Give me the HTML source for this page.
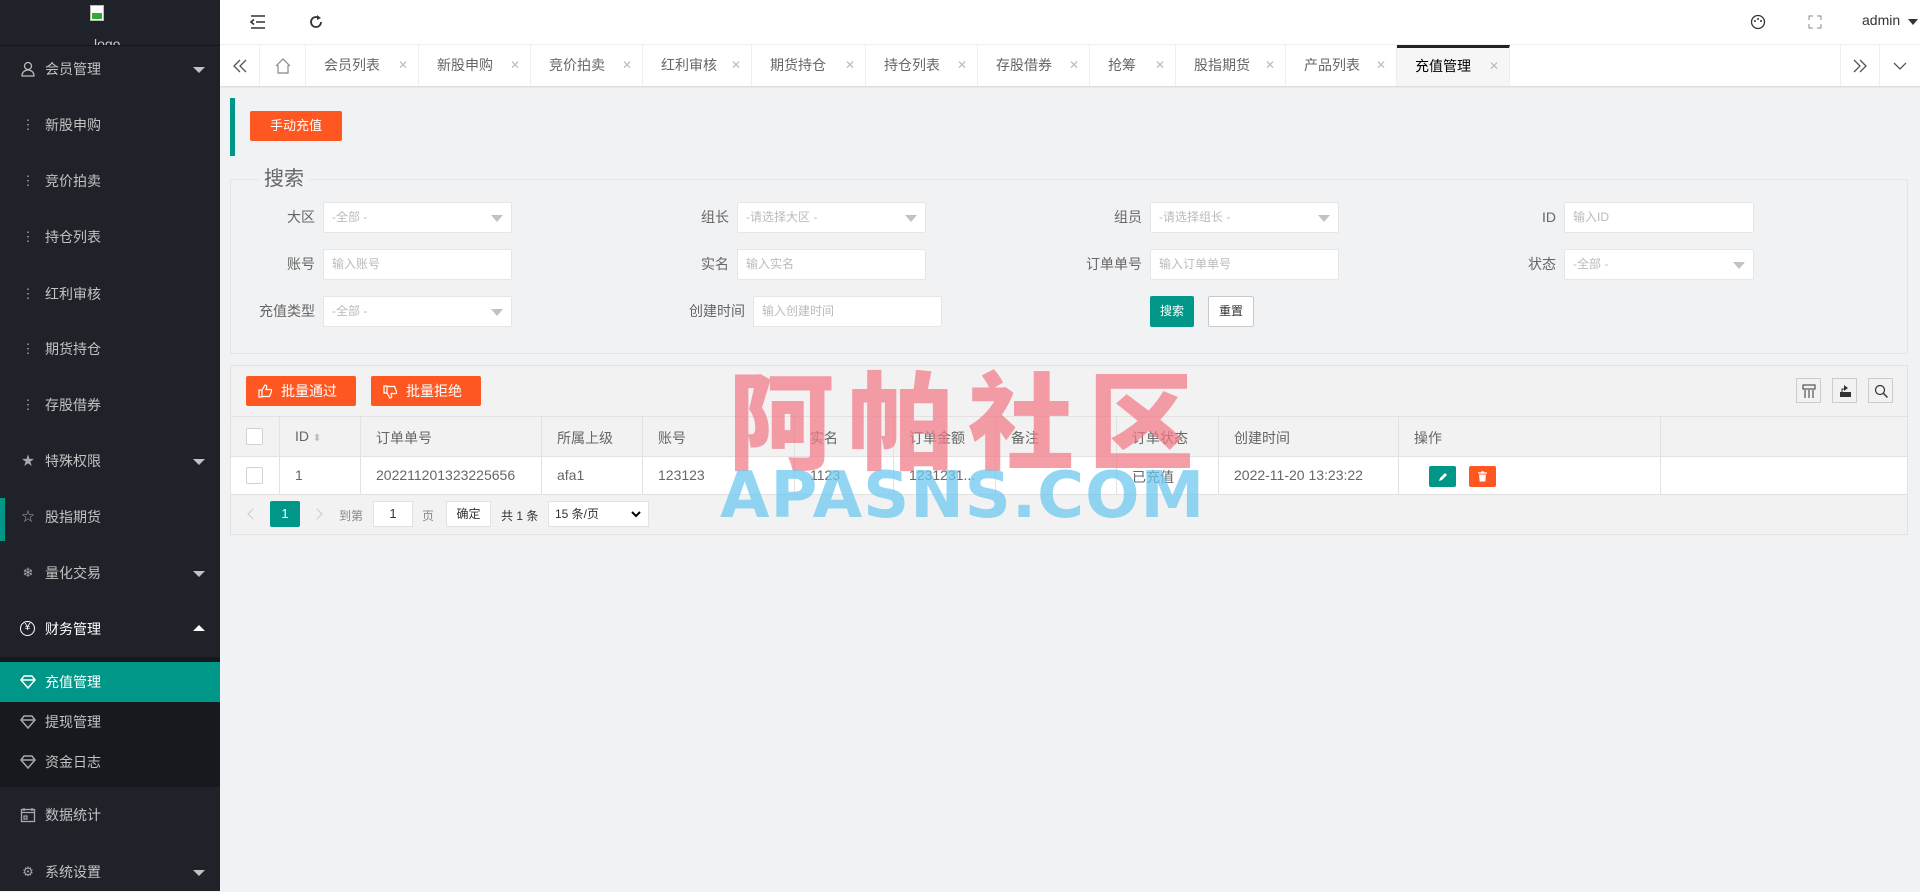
<!DOCTYPE html>
<html><head><meta charset="utf-8"><style>
*{margin:0;padding:0;box-sizing:border-box}
body{width:1920px;height:891px;overflow:hidden;background:#f1f2f4;font-family:"Liberation Sans","Noto Sans CJK SC",sans-serif;font-size:14px;color:#666;position:relative}
.a{position:absolute}
#side{left:0;top:0;width:220px;height:891px;background:#20222a}
.mi{position:absolute;left:0;width:220px;height:40px;line-height:40px;color:#c2c2c2;font-size:14px}
.mi .ic{position:absolute;left:20px;width:16px;text-align:center;font-size:13px;color:#aaa}
.mi svg{position:absolute;left:20px;top:12px}
.mi .tx{position:absolute;left:45px}
.mi .ar{position:absolute;right:15px;top:18px;width:0;height:0;border-left:6px solid transparent;border-right:6px solid transparent;border-top:6px solid #c2c2c2}
.mi .up{border-top:none;border-bottom:6px solid #fff;top:16px}
#hdr{left:220px;top:0;width:1700px;height:45px;background:#fff;border-bottom:1px solid #f0f0f0}
#tabs{left:220px;top:45px;width:1700px;height:41px;background:#fff;box-shadow:0 1px 2px rgba(0,0,0,.12)}
.tb{position:absolute;top:0;height:41px;line-height:41px;border-right:1px solid #eee;color:#666;font-size:14px;padding-left:18px}
.tb .x{position:absolute;right:10px;color:#bbb;font-size:12px}
.tb svg{position:absolute;left:50%;top:50%;transform:translate(-50%,-50%)}
.inp{position:absolute;height:31px;background:#fff;border:1px solid #e6e6e6;border-radius:2px;color:#bbb;font-size:12px;line-height:29px;padding-left:8px}
.inp .dd{position:absolute;right:8px;top:12px;border-left:6px solid transparent;border-right:6px solid transparent;border-top:7px solid #c2c2c2}
.lb{position:absolute;text-align:right;width:100px;font-size:14px;color:#666;line-height:31px}
.btn{position:absolute;background:#ff5722;color:#fff;text-align:center;border-radius:2px;font-size:14px}
.th,.td{position:absolute;padding-left:14px;white-space:nowrap}
.vl{position:absolute;top:416px;width:1px;height:79px;background:#e2e2e2}
.cb{position:absolute;width:17px;height:17px;border:1px solid #d2d2d2;background:#fff;border-radius:2px}
.ti{position:absolute;top:378px;width:25px;height:25px;border:1px solid #ccc}
.ti svg{position:absolute;left:5px;top:5px}
</style></head><body>
<div id="side" class="a">
 <div class="a" style="left:90px;top:5px;width:14px;height:16px;border:1px solid #bbb;background:#fff"><div style="position:absolute;left:1px;bottom:1px;width:10px;height:6px;background:#3a3"></div></div>
 <div class="a" style="left:94px;top:33px;height:12px;overflow:hidden;color:#ccc;font-size:14px;line-height:22px">logo</div>
 <div class="a" style="left:0;top:45px;width:220px;height:1px;background:#15161b"></div>
 <div class="mi" style="top:49px"><svg width="16" height="16"><circle cx="8" cy="5" r="3.5" stroke="#bbb" stroke-width="1.3" fill="none"/><path d="M2 15c0-4 3-6 6-6s6 2 6 6z" stroke="#bbb" stroke-width="1.3" fill="none"/></svg><span class="tx">会员管理</span><span class="ar"></span></div>
 <div class="mi" style="top:105px"><span class="ic">⋮</span><span class="tx">新股申购</span></div>
 <div class="mi" style="top:161px"><span class="ic">⋮</span><span class="tx">竞价拍卖</span></div>
 <div class="mi" style="top:217px"><span class="ic">⋮</span><span class="tx">持仓列表</span></div>
 <div class="mi" style="top:274px"><span class="ic">⋮</span><span class="tx">红利审核</span></div>
 <div class="mi" style="top:329px"><span class="ic">⋮</span><span class="tx">期货持仓</span></div>
 <div class="mi" style="top:385px"><span class="ic">⋮</span><span class="tx">存股借券</span></div>
 <div class="mi" style="top:441px"><span class="ic">★</span><span class="tx">特殊权限</span><span class="ar"></span></div>
 <div class="a" style="left:0;top:498px;width:5px;height:43px;background:#009688"></div>
 <div class="mi" style="top:497px"><span class="ic">☆</span><span class="tx">股指期货</span></div>
 <div class="mi" style="top:553px"><span class="ic">❄</span><span class="tx">量化交易</span><span class="ar"></span></div>
 <div class="mi" style="top:609px;color:#fff"><span class="ic" style="color:#fff;border:1.5px solid #fff;border-radius:50%;width:15px;height:15px;line-height:12px;top:12px;font-size:10px">¥</span><span class="tx">财务管理</span><span class="ar up"></span></div>
 <div class="a" style="left:0;top:657px;width:220px;height:130px;background:#18191e"></div>
 <div class="mi" style="top:662px;background:#009688;color:#fff"><svg width="16" height="16"><path d="M1 6l3-4h8l3 4-7 8z M1 6h14" stroke="#fff" stroke-width="1.5" fill="none"/></svg><span class="tx">充值管理</span></div>
 <div class="mi" style="top:702px"><svg width="16" height="16"><path d="M1 6l3-4h8l3 4-7 8z M1 6h14" stroke="#aaa" stroke-width="1.5" fill="none"/></svg><span class="tx">提现管理</span></div>
 <div class="mi" style="top:742px"><svg width="16" height="16"><path d="M1 6l3-4h8l3 4-7 8z M1 6h14" stroke="#aaa" stroke-width="1.5" fill="none"/></svg><span class="tx">资金日志</span></div>
 <div class="mi" style="top:795px"><svg width="16" height="16"><rect x="1.5" y="2.5" width="13" height="12" stroke="#aaa" stroke-width="1.3" fill="none"/><path d="M1.5 5.5h13M4 1v3M12 1v3M4 9h3v3H4z" stroke="#aaa" stroke-width="1.2" fill="none"/></svg><span class="tx">数据统计</span></div>
 <div class="mi" style="top:852px"><span class="ic">⚙</span><span class="tx">系统设置</span><span class="ar"></span></div>
</div>
<div id="hdr" class="a">
 <svg class="a" style="left:30px;top:15px" width="16" height="14"><path d="M1 1h14M6 7h9M1 13h14M4 4.5L1 7l3 2.5" stroke="#333" stroke-width="1.6" fill="none"/></svg>
 <svg class="a" style="left:88px;top:14px" width="16" height="16"><path d="M13 8a5 5 0 1 1-2-4" stroke="#333" stroke-width="1.8" fill="none"/><path d="M9 1l4 3-4 2z" fill="#333"/></svg>
 <svg class="a" style="left:1530px;top:14px" width="16" height="16"><circle cx="8" cy="8" r="6.5" stroke="#333" stroke-width="1.3" fill="none"/><circle cx="5" cy="7" r="1" fill="#333"/><circle cx="8" cy="5" r="1" fill="#333"/><circle cx="11" cy="7" r="1" fill="#333"/></svg>
 <svg class="a" style="left:1588px;top:15px" width="14" height="14"><path d="M1 5V1h4M9 1h4v4M13 9v4H9M5 13H1V9" stroke="#888" stroke-width="1" fill="none"/></svg>
 <div class="a" style="left:1642px;top:12px;color:#333;font-size:14px">admin</div>
 <div class="a" style="left:1688px;top:19px;border-left:5px solid transparent;border-right:5px solid transparent;border-top:6px solid #333"></div>
</div>
<div id="tabs" class="a">
 <div class="tb" style="left:0;width:40px;padding:0"><svg width="16" height="16"><path d="M8 2L2 8l6 6M14 2L8 8l6 6" stroke="#555" stroke-width="1.3" fill="none"/></svg></div>
 <div class="tb" style="left:40px;width:46px;padding:0"><svg width="18" height="18"><path d="M2 9L9 2l7 7M4 8v8h10V8" stroke="#888" stroke-width="1.2" fill="none"/></svg></div>
 <div class="tb" style="left:86px;width:113px">会员列表<span class="x">✕</span></div>
 <div class="tb" style="left:199px;width:112px">新股申购<span class="x">✕</span></div>
 <div class="tb" style="left:311px;width:112px">竞价拍卖<span class="x">✕</span></div>
 <div class="tb" style="left:423px;width:109px">红利审核<span class="x">✕</span></div>
 <div class="tb" style="left:532px;width:114px">期货持仓<span class="x">✕</span></div>
 <div class="tb" style="left:646px;width:112px">持仓列表<span class="x">✕</span></div>
 <div class="tb" style="left:758px;width:112px">存股借券<span class="x">✕</span></div>
 <div class="tb" style="left:870px;width:86px">抢筹<span class="x">✕</span></div>
 <div class="tb" style="left:956px;width:110px">股指期货<span class="x">✕</span></div>
 <div class="tb" style="left:1066px;width:111px">产品列表<span class="x">✕</span></div>
 <div class="tb" style="left:1177px;width:113px;background:#f6f6f6;color:#000;border-top:3px solid #222;line-height:36px">充值管理<span class="x">✕</span></div>
 <div class="tb" style="left:1620px;width:40px;padding:0;border-left:1px solid #eee"><svg width="16" height="16"><path d="M2 2l6 6-6 6M8 2l6 6-6 6" stroke="#555" stroke-width="1.3" fill="none"/></svg></div>
 <div class="tb" style="left:1660px;width:40px;padding:0;border:none"><svg width="14" height="10"><path d="M1 2l6 6 6-6" stroke="#555" stroke-width="1.3" fill="none"/></svg></div>
</div>
<div class="a" style="left:230px;top:98px;width:5px;height:58px;background:#009688"></div>
<div class="btn" style="left:250px;top:111px;width:92px;height:30px;line-height:30px;font-size:13px">手动充值</div>
<div class="a" style="left:230px;top:179px;width:1678px;height:175px;border:1px solid #e2e4e8;border-radius:2px"></div>
<div class="a" style="left:258px;top:166px;background:#f1f2f4;padding:0 6px;font-size:20px;color:#666;line-height:26px">搜索</div>
<div class="lb" style="left:215px;top:202px">大区</div><div class="inp" style="left:323px;top:202px;width:189px">-全部 -<span class="dd"></span></div>
<div class="lb" style="left:629px;top:202px">组长</div><div class="inp" style="left:737px;top:202px;width:189px">-请选择大区 -<span class="dd"></span></div>
<div class="lb" style="left:1042px;top:202px">组员</div><div class="inp" style="left:1150px;top:202px;width:189px">-请选择组长 -<span class="dd"></span></div>
<div class="lb" style="left:1456px;top:202px">ID</div><div class="inp" style="left:1564px;top:202px;width:190px">输入ID</div>
<div class="lb" style="left:215px;top:249px">账号</div><div class="inp" style="left:323px;top:249px;width:189px">输入账号</div>
<div class="lb" style="left:629px;top:249px">实名</div><div class="inp" style="left:737px;top:249px;width:189px">输入实名</div>
<div class="lb" style="left:1042px;top:249px">订单单号</div><div class="inp" style="left:1150px;top:249px;width:189px">输入订单单号</div>
<div class="lb" style="left:1456px;top:249px">状态</div><div class="inp" style="left:1564px;top:249px;width:190px">-全部 -<span class="dd"></span></div>
<div class="lb" style="left:215px;top:296px">充值类型</div><div class="inp" style="left:323px;top:296px;width:189px">-全部 -<span class="dd"></span></div>
<div class="lb" style="left:645px;top:296px">创建时间</div><div class="inp" style="left:753px;top:296px;width:189px">输入创建时间</div>
<div class="btn" style="left:1150px;top:296px;width:44px;height:31px;line-height:31px;background:#009688;font-size:12px">搜索</div>
<div class="btn" style="left:1208px;top:296px;width:46px;height:31px;line-height:29px;background:#fff;color:#333;border:1px solid #c9c9c9;font-size:12px">重置</div>

<div class="a" style="left:230px;top:365px;width:1678px;height:170px;border:1px solid #e2e2e2;background:#f2f2f2"></div>
<div class="btn" style="left:246px;top:376px;width:110px;height:30px;line-height:30px;padding-left:16px"><svg class="a" style="left:12px;top:8px" width="14" height="14"><path d="M1 6h3v7H1zM4 6l3-5c1.5 0 2 1 1.5 2.5L8 5.5h4.5c1 0 1.5 1 1 2l-2 5H4" stroke="#fff" stroke-width="1.2" fill="none"/></svg>批量通过</div>
<div class="btn" style="left:371px;top:376px;width:110px;height:30px;line-height:30px;padding-left:16px"><svg class="a" style="left:12px;top:9px" width="14" height="14"><path d="M1 8h3V1H1zM4 8l3 5c1.5 0 2-1 1.5-2.5L8 8.5h4.5c1 0 1.5-1 1-2l-2-5H4" stroke="#fff" stroke-width="1.2" fill="none"/></svg>批量拒绝</div>
<div class="ti" style="left:1796px"><svg width="14" height="14"><rect x="1" y="1" width="12" height="4" stroke="#333" fill="none"/><path d="M3 6v8M7 6v8M11 6v8" stroke="#333"/></svg></div>
<div class="ti" style="left:1832px"><svg width="14" height="14"><path d="M6 1l4 3-4 3z" fill="#333"/><rect x="2" y="8" width="11" height="5" fill="#333"/><path d="M4 8V5h3" stroke="#333" fill="none"/></svg></div>
<div class="ti" style="left:1868px"><svg width="14" height="14"><circle cx="6" cy="6" r="4.5" stroke="#333" stroke-width="1.2" fill="none"/><path d="M9.5 9.5l4 4" stroke="#333" stroke-width="1.4"/></svg></div>
<div class="a" style="left:231px;top:416px;width:1676px;height:1px;background:#e2e2e2"></div>
<div class="a" style="left:231px;top:456px;width:1676px;height:39px;background:#fff;border-top:1px solid #e2e2e2;border-bottom:1px solid #e2e2e2"></div>
<div class="vl" style="left:279px"></div><div class="vl" style="left:360px"></div><div class="vl" style="left:541px"></div><div class="vl" style="left:642px"></div><div class="vl" style="left:794px"></div><div class="vl" style="left:893px"></div><div class="vl" style="left:995px"></div><div class="vl" style="left:1116px"></div><div class="vl" style="left:1218px"></div><div class="vl" style="left:1398px"></div><div class="vl" style="left:1660px"></div>
<div class="cb" style="left:246px;top:428px"></div><div class="cb" style="left:246px;top:467px"></div>
<div class="th" style="left:281px;top:428px">ID <span style="color:#bbb;font-size:10px">⬍</span></div>
<div class="th" style="left:362px;top:428px">订单单号</div><div class="th" style="left:543px;top:428px">所属上级</div><div class="th" style="left:644px;top:428px">账号</div><div class="th" style="left:796px;top:428px">实名</div><div class="th" style="left:895px;top:428px">订单金额</div><div class="th" style="left:997px;top:428px">备注</div><div class="th" style="left:1118px;top:428px">订单状态</div><div class="th" style="left:1220px;top:428px">创建时间</div><div class="th" style="left:1400px;top:428px">操作</div>
<div class="td" style="left:281px;top:467px">1</div><div class="td" style="left:362px;top:467px">202211201323225656</div><div class="td" style="left:543px;top:467px">afa1</div><div class="td" style="left:644px;top:467px">123123</div><div class="td" style="left:796px;top:467px">1123</div><div class="td" style="left:895px;top:467px">1231231...</div><div class="td" style="left:1118px;top:467px">已充值</div><div class="td" style="left:1220px;top:467px">2022-11-20 13:23:22</div>
<div class="btn" style="left:1429px;top:466px;width:27px;height:21px;background:#009688"><svg class="a" style="left:8px;top:5px" width="11" height="11"><path d="M2 10l1-3 5-5 2 2-5 5z" fill="#fff"/></svg></div>
<div class="btn" style="left:1469px;top:466px;width:27px;height:21px"><svg class="a" style="left:8px;top:5px" width="11" height="11"><path d="M1 2h9M4 1h3" stroke="#fff" stroke-width="1.2"/><path d="M2 3.5h7l-.7 7H2.7z" fill="#fff"/></svg></div>
<div class="a" style="left:249px;top:510px;width:8px;height:8px;border-left:1px solid #ccc;border-bottom:1px solid #ccc;transform:rotate(45deg)"></div>
<div class="btn" style="left:270px;top:501px;width:30px;height:26px;line-height:26px;background:#009688;font-size:13px">1</div>
<div class="a" style="left:313px;top:510px;width:8px;height:8px;border-right:1px solid #ccc;border-top:1px solid #ccc;transform:rotate(45deg)"></div>
<div class="a" style="left:339px;top:507px;font-size:12px;color:#888">到第</div>
<div class="a" style="left:373px;top:501px;width:40px;height:26px;background:#fff;border:1px solid #e2e2e2;text-align:center;line-height:24px;font-size:13px;color:#333">1</div>
<div class="a" style="left:422px;top:507px;font-size:12px;color:#888">页</div>
<div class="a" style="left:446px;top:501px;width:45px;height:26px;background:#fff;border:1px solid #e2e2e2;text-align:center;line-height:24px;font-size:12px;color:#333">确定</div>
<div class="a" style="left:501px;top:507px;font-size:12px;color:#333">共 1 条</div>
<div class="a" style="left:548px;top:501px;width:101px;height:26px;background:#fff;border:1px solid #e2e2e2;line-height:24px;font-size:12px;color:#333;padding-left:6px">15 条/页<svg class="a" style="right:7px;top:9px" width="10" height="7"><path d="M1 1l4 4 4-4" stroke="#000" stroke-width="2" fill="none"/></svg></div>
<div class="a" style="left:728px;top:355px;font-size:106px;color:rgba(242,120,135,.72);letter-spacing:14px;line-height:120px;font-family:'Noto Sans CJK SC',sans-serif;font-weight:900">阿帕社区</div>
<div class="a" style="left:720px;top:464px;font-size:64px;font-weight:bold;color:rgba(110,200,240,.75);letter-spacing:1px;line-height:64px;font-family:'DejaVu Sans',sans-serif">APASNS.COM</div>
</body></html>
